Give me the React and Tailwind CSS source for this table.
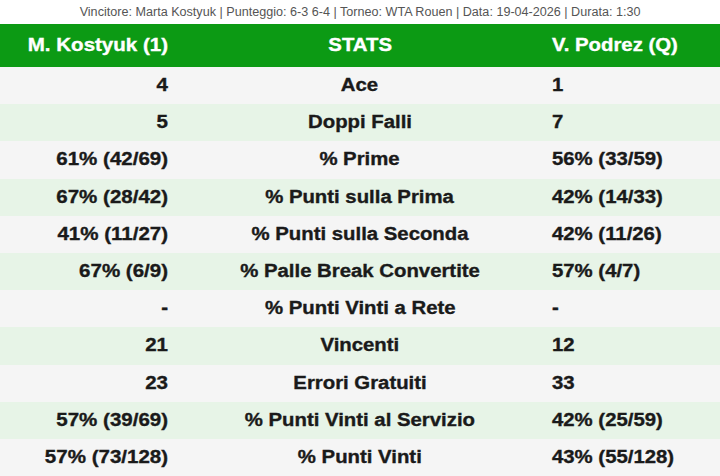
const rows = [
  ["4", "Ace", "1"],
  ["5", "Doppi Falli", "7"],
  ["61% (42/69)", "% Prime", "56% (33/59)"],
  ["67% (28/42)", "% Punti sulla Prima", "42% (14/33)"],
  ["41% (11/27)", "% Punti sulla Seconda", "42% (11/26)"],
  ["67% (6/9)", "% Palle Break Convertite", "57% (4/7)"],
  ["-", "% Punti Vinti a Rete", "-"],
  ["21", "Vincenti", "12"],
  ["23", "Errori Gratuiti", "33"],
  ["57% (39/69)", "% Punti Vinti al Servizio", "42% (25/59)"],
  ["57% (73/128)", "% Punti Vinti", "43% (55/128)"],
];

function Row({ a, label, b, className }) {
  return (
    <div className={`grid grid-cols-[180px_1fr_180px] items-center text-[18px] font-bold [-webkit-text-stroke:0.35px_currentColor] ${className}`}>
      <div className="px-3 text-right">
        <span className="inline-block origin-right scale-x-114">{a}</span>
      </div>
      <div className="text-center">
        <span className="inline-block origin-center scale-x-113">{label}</span>
      </div>
      <div className="px-3 text-left">
        <span className="inline-block origin-left scale-x-113">{b}</span>
      </div>
    </div>
  );
}

export default function App() {
  return (
    <div className="h-[476px] w-[720px] overflow-hidden bg-white font-['Liberation_Sans',Arial,sans-serif]">
      <p className="flex h-6 items-center justify-center text-[12px] text-[#555]">
        <span className="inline-block scale-x-105">
          Vincitore: Marta Kostyuk | Punteggio: 6-3 6-4 | Torneo: WTA Rouen | Data: 19-04-2026 | Durata: 1:30
        </span>
      </p>
      <Row a="M. Kostyuk (1)" label="STATS" b="V. Podrez (Q)" className="h-[43px] bg-[#0c9a14] text-white" />
      {rows.map(([a, label, b], i) => (
        <Row
          key={label}
          a={a}
          label={label}
          b={b}
          className={`h-[37.2px] text-[#1a1a1a] ${i % 2 === 0 ? "bg-[#f5f5f5]" : "bg-[#e7f4e7]"}`}
        />
      ))}
    </div>
  );
}
